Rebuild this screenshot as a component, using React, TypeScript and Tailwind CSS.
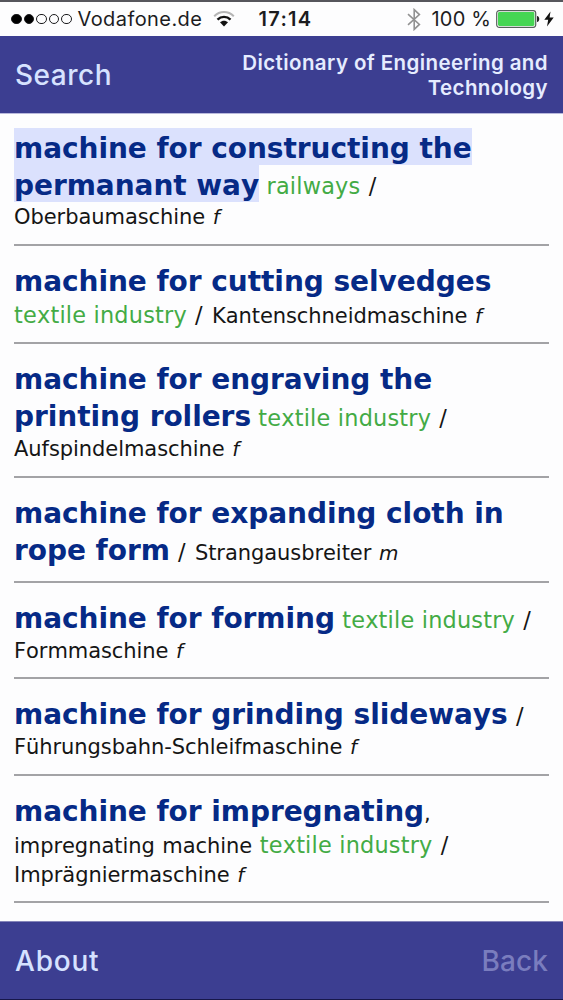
import type { ReactNode } from "react";
import { clsx } from "clsx";

type Part = { kind: "head" | "field" | "text" | "slash" | "gender"; text: string };
type Line = { size: "lg" | "md" | "sm"; parts: Part[] };
type Entry = { lines: Line[]; selected?: boolean };

const head = (text: string): Part => ({ kind: "head", text });
const field = (text: string): Part => ({ kind: "field", text });
const plain = (text: string): Part => ({ kind: "text", text });
const gender = (text: string): Part => ({ kind: "gender", text });
const slash: Part = { kind: "slash", text: " / " };

const ENTRIES: Entry[] = [
  {
    selected: true,
    lines: [
      { size: "lg", parts: [head("machine for constructing the")] },
      { size: "lg", parts: [head("permanant way"), field(" railways"), slash] },
      { size: "sm", parts: [plain("Oberbaumaschine "), gender("f")] },
    ],
  },
  {
    lines: [
      { size: "lg", parts: [head("machine for cutting selvedges")] },
      { size: "md", parts: [field("textile industry"), slash, plain("Kantenschneidmaschine "), gender("f")] },
    ],
  },
  {
    lines: [
      { size: "lg", parts: [head("machine for engraving the")] },
      { size: "lg", parts: [head("printing rollers"), field(" textile industry"), slash] },
      { size: "sm", parts: [plain("Aufspindelmaschine "), gender("f")] },
    ],
  },
  {
    lines: [
      { size: "lg", parts: [head("machine for expanding cloth in")] },
      { size: "lg", parts: [head("rope form"), slash, plain("Strangausbreiter "), gender("m")] },
    ],
  },
  {
    lines: [
      { size: "lg", parts: [head("machine for forming"), field(" textile industry"), slash] },
      { size: "sm", parts: [plain("Formmaschine "), gender("f")] },
    ],
  },
  {
    lines: [
      { size: "lg", parts: [head("machine for grinding slideways"), slash] },
      { size: "sm", parts: [plain("Führungsbahn-Schleifmaschine "), gender("f")] },
    ],
  },
  {
    lines: [
      { size: "lg", parts: [head("machine for impregnating"), plain(",")] },
      { size: "md", parts: [plain("impregnating machine "), field("textile industry"), slash] },
      { size: "sm", parts: [plain("Imprägniermaschine "), gender("f")] },
    ],
  },
];

const PART_STYLE: Record<Part["kind"], string> = {
  head: "text-[28px] font-bold tracking-[-0.05px] text-[#062a86]",
  field: "text-[22.4px] leading-none tracking-[0.2px] text-[#43ab45]",
  text: "text-[21px] leading-none tracking-[-0.06px] [word-spacing:1px] text-[#151515]",
  slash: "text-[22.4px] leading-none tracking-[1.1px] text-[#151515]",
  gender: "text-[20px] leading-none italic text-[#151515]",
};

const LINE_STYLE: Record<Line["size"], string> = {
  lg: "h-[37px] text-[28px] leading-[37px]",
  md: "h-[30.9px] text-[22.4px] leading-[30.9px]",
  sm: "h-[28.5px] text-[21px] leading-[28.5px]",
};

export default function App() {
  return (
    <div className="flex h-[1000px] w-[563px] flex-col overflow-hidden bg-[#fdfdfe]">
      <StatusBar />
      <Toolbar className="h-[78px] border-b border-[#b9b9dc]">
        <span className="text-[28px] font-medium tracking-[0.5px] text-[#d6e2ff]">Search</span>
        <h1 className="w-[330px] text-right text-[20.5px] leading-[25px] font-semibold tracking-[0.4px] text-[#e6ecff]">
          Dictionary of Engineering and Technology
        </h1>
      </Toolbar>
      <main className="flex-1 overflow-hidden px-[14px] pt-[15px] font-['DejaVu_Sans',Verdana,sans-serif] [font-kerning:none]">
        {ENTRIES.map((entry, i) => (
          <EntryRow key={i} entry={entry} />
        ))}
      </main>
      <Toolbar className="h-[79px] border-t border-b border-t-[#8585ba] border-b-[#17174a] pt-px">
        <span className="text-[28px] font-medium tracking-[0.8px] text-[#d6e2ff]">About</span>
        <span className="text-[28px] font-medium tracking-[0.1px] text-[#7a7dbe]">Back</span>
      </Toolbar>
    </div>
  );
}

function Toolbar({ className, children }: { className: string; children: ReactNode }) {
  return (
    <div
      className={clsx(
        "flex shrink-0 items-center justify-between bg-[#3c3e91] px-[15px] font-[Inter,sans-serif]",
        className,
      )}
    >
      {children}
    </div>
  );
}

function EntryRow({ entry }: { entry: Entry }) {
  return (
    <article className="mb-[17px] border-b-2 border-[#a3a3a6] pb-[12px]">
      {entry.lines.map((line, i) => (
        <p key={i} className={clsx("whitespace-pre", LINE_STYLE[line.size])}>
          {line.parts.map((part, j) => (
            <span
              key={j}
              className={clsx(
                PART_STYLE[part.kind],
                entry.selected && part.kind === "head" && "bg-[#dbe1fd] pt-[3.5px] pb-[0.6px]",
              )}
            >
              {part.text}
            </span>
          ))}
        </p>
      ))}
    </article>
  );
}

function StatusBar() {
  return (
    <header className="flex h-[36px] shrink-0 items-center border-t-2 border-[#56565c] pl-[11px] font-[Inter,sans-serif] text-[20px] text-[#1c1c1e]">
      <div className="flex gap-[2px]">
        {[true, true, false, false, false].map((on, i) => (
          <span
            key={i}
            className={clsx("size-[10.5px] rounded-full border border-[#1c1c1e]", on && "bg-black")}
          />
        ))}
      </div>
      <span className="ml-[6px] w-[125px] tracking-[0.42px] whitespace-nowrap">Vodafone.de</span>
      <WifiIcon />
      <span className="ml-[24px] w-[55px] font-semibold tracking-[1.3px]">17:14</span>
      <BluetoothIcon />
      <span className="ml-[11px] w-[64px] tracking-[0.2px] whitespace-nowrap">100 %</span>
      <BatteryIcon />
      <svg className="ml-[4px]" width="10" height="16" viewBox="0 0 10 16">
        <path d="M6.5 0.5 0.3 8.8H4.2L3 15.5 9.7 6.6H5.6Z" fill="#111" />
      </svg>
    </header>
  );
}

function WifiIcon() {
  return (
    <svg className="ml-[10px]" width="22" height="16" viewBox="0 0 22 16" fill="none">
      <path d="M1.2 5.2C6.8-.4 15.2-.4 20.8 5.2" stroke="#b5b5b5" strokeWidth="2" />
      <path d="M4.5 8.6C8.2 4.9 13.8 4.9 17.5 8.6" stroke="#111" strokeWidth="2.4" />
      <path d="M11 15.4 7 11.3C9.2 9.2 12.8 9.2 15 11.3Z" fill="#111" />
    </svg>
  );
}

function BluetoothIcon() {
  return (
    <svg className="ml-[93px]" width="14" height="23" viewBox="0 0 14 23" fill="none">
      <path d="M1 6.2 12.4 16.4 7.2 21.4V1.6L12.4 6.6 1 16.8" stroke="#929292" strokeWidth="1.6" />
    </svg>
  );
}

function BatteryIcon() {
  return (
    <svg width="44" height="18" viewBox="0 0 44 18">
      <rect x="0.7" y="0.7" width="39" height="16.6" rx="2.5" fill="#fff" stroke="#55605a" strokeWidth="1.2" />
      <rect x="2" y="2" width="36.4" height="14" rx="1.4" fill="#45d653" />
      <path d="M41 6C44 6.4 44 11.6 41 12Z" fill="#222" />
    </svg>
  );
}
